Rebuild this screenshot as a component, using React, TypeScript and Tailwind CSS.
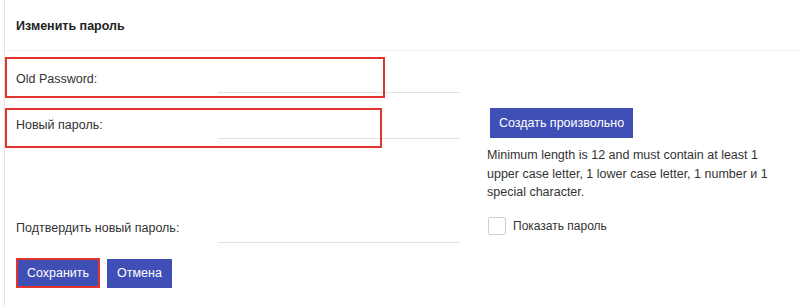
export default function App() {
  const font = { fontFamily: '"Liberation Sans", Arial, sans-serif' }

  return (
    <div className="h-[307px] w-[800px] overflow-hidden bg-white pl-[4px] text-[#333]" style={font}>
      <div className="flex h-full flex-col border-l border-[#e4e4e4]">
        {/* header */}
        <div className="h-[51px] border-b border-[#f0f0f0] pl-[11px] pt-[17px]">
          <h1 className="text-[12.5px] font-bold leading-[18px] text-[#222]">Изменить пароль</h1>
        </div>

        <div className="flex">
          {/* left column: fields */}
          <div className="w-[456px]">
            <div className="relative mt-[6px] flex h-[41px]">
              <label className="w-[213px] pl-[11px] pt-[13px] text-[12.5px] leading-[18px]">Old Password:</label>
              <div className="h-[36px] w-[242px] border-b border-[#e2e2e2]" />
              <div className="absolute left-0 top-0 h-[41px] w-[380px] border-2 border-[#e0352d]" />
            </div>

            <div className="relative mt-[10px] flex h-[40px]">
              <label className="w-[213px] pl-[11px] pt-[8px] text-[12.5px] leading-[18px]">Новый пароль:</label>
              <div className="h-[31px] w-[242px] border-b border-[#e2e2e2]" />
              <div className="absolute left-0 top-0 h-[40px] w-[377px] border-2 border-[#e0352d]" />
            </div>

            <div className="mt-[61px] flex h-[34px]">
              <label className="w-[213px] pl-[11px] pt-[10px] text-[12.5px] leading-[18px]">Подтвердить новый пароль:</label>
              <div className="h-[34px] w-[242px] border-b border-[#e2e2e2]" />
            </div>

            <div className="mt-[15px] flex items-center gap-[7px] pl-[11px]">
              <button className="h-[30px] w-[84px] border-2 border-[#e0352d] bg-[#3f4fb6] text-[12.5px] text-white">
                Сохранить
              </button>
              <button className="mt-[1px] h-[29px] w-[65px] bg-[#3f4fb6] text-[12.5px] text-white">Отмена</button>
            </div>
          </div>

          {/* right column */}
          <div className="ml-[26px] pt-[57px]">
            <button className="ml-[3px] h-[30px] w-[143px] bg-[#3f4fb6] text-[12.5px] text-white">Создать произвольно</button>
            <p className="mt-[8px] text-[12.5px] leading-[18.5px]">
              <span className="block whitespace-nowrap">Minimum length is 12 and must contain at least 1</span>
              <span className="block whitespace-nowrap">upper case letter, 1 lower case letter, 1 number и 1</span>
              <span className="block whitespace-nowrap">special character.</span>
            </p>
            <label className="mt-[15px] flex items-center gap-[7px]">
              <span className="ml-[1px] h-[18px] w-[18px] rounded-[2px] border border-[#cfcfcf] bg-white" />
              <span className="text-[12px] leading-[18px]">Показать пароль</span>
            </label>
          </div>
        </div>
      </div>
    </div>
  )
}
